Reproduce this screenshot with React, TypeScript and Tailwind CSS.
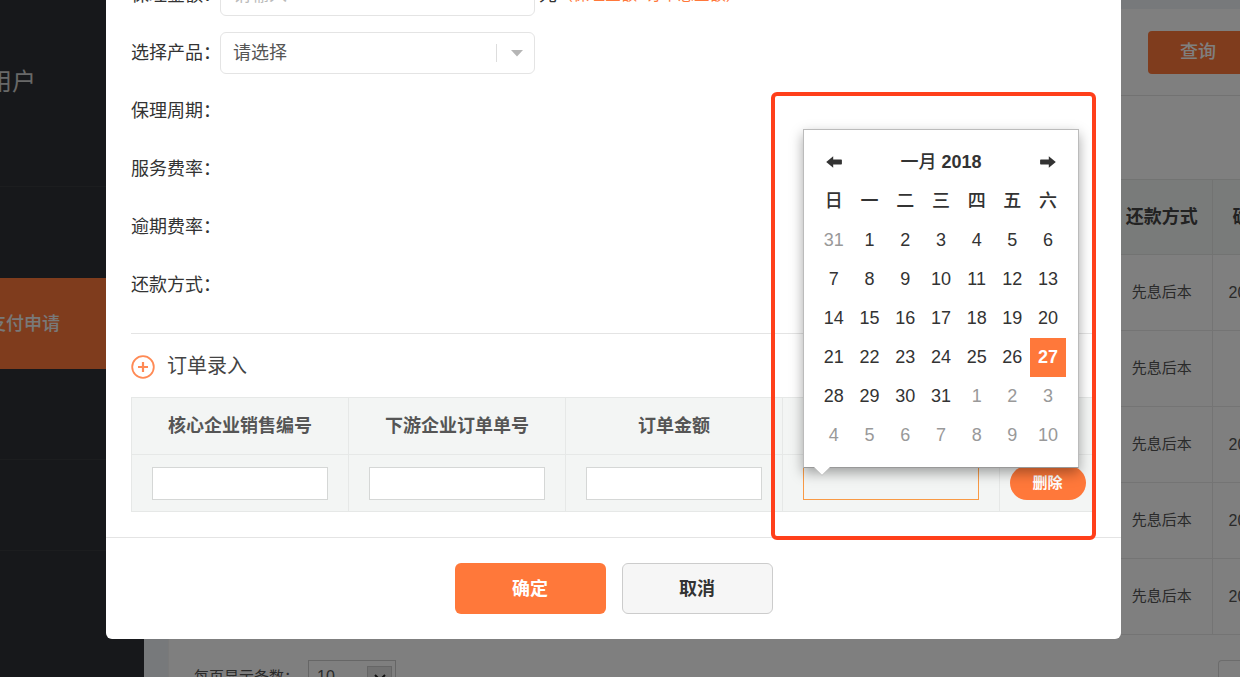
import { useState } from 'react'

interface Day {
  n: number
  muted?: boolean
}

const WEEKDAYS = ['日', '一', '二', '三', '四', '五', '六']

// January 2018 with the tail of December and the head of February
const DAYS: Day[] = [
  { n: 31, muted: true },
  ...Array.from({ length: 31 }, (_, i) => ({ n: i + 1 })),
  ...Array.from({ length: 10 }, (_, i) => ({ n: i + 1, muted: true })),
]
const WEEKS = Array.from({ length: 6 }, (_, i) => DAYS.slice(i * 7, i * 7 + 7))

const REPAY_ROWS = ['20', '', '20', '20', '20']

function ArrowIcon({ flip }: { flip?: boolean }) {
  return (
    <svg viewBox="0 0 16 12" className={flip ? 'mx-auto h-3 w-4 rotate-180' : 'mx-auto h-3 w-4'} fill="currentColor">
      <path d="M0.2 6 7.2 0.2V3.6H15.2Q15.9 3.6 15.9 4.3V7.7Q15.9 8.4 15.2 8.4H7.2V11.8Z" />
    </svg>
  )
}

function Calendar() {
  const [selected, setSelected] = useState(27)

  return (
    <div className="absolute bottom-full left-0 z-20 -mb-px w-[276px] border border-[#bbb] border-b-[#999] bg-white px-3 pt-[13px] pb-3 shadow-[0_5px_12px_rgba(0,0,0,0.35)]">
      <table className="w-full table-fixed border-collapse text-center text-lg leading-6 text-[#333]">
        <thead>
          <tr className="h-[39px]">
            <th className="p-0">
              <button type="button" aria-label="上个月" className="block w-full"><ArrowIcon /></button>
            </th>
            <th colSpan={5} className="p-0 font-bold">
              <span className="font-medium">一月</span> 2018
            </th>
            <th className="p-0">
              <button type="button" aria-label="下个月" className="block w-full"><ArrowIcon flip /></button>
            </th>
          </tr>
          <tr className="h-[39px]">
            {WEEKDAYS.map((d) => (
              <th key={d} className="p-0 font-medium">{d}</th>
            ))}
          </tr>
        </thead>
        <tbody>
          {WEEKS.map((week, i) => (
            <tr key={i} className="h-[39px]">
              {week.map((d) => {
                const active = !d.muted && d.n === selected
                return (
                  <td key={d.n} className="p-0">
                    <button
                      type="button"
                      onClick={() => !d.muted && setSelected(d.n)}
                      className={
                        active
                          ? 'block h-[39px] w-full bg-[#ff783a] font-bold text-white'
                          : d.muted
                            ? 'block h-[39px] w-full text-[#999]'
                            : 'block h-[39px] w-full'
                      }
                    >
                      {d.n}
                    </button>
                  </td>
                )
              })}
            </tr>
          ))}
        </tbody>
      </table>
      <svg viewBox="0 0 16 9" className="absolute top-full left-2.5 h-[9px] w-4">
        <path d="M0 0H16L8 8Z" fill="#fff" />
        <path d="M0 0.5 8 8.3 16 0.5" fill="none" stroke="#bbb" strokeWidth="0.7" />
      </svg>
    </div>
  )
}

function Background() {
  return (
    <div className="flex h-full">
      <aside className="w-36 shrink-0 overflow-hidden bg-[#2e3037] text-lg text-white">
        <div className="h-[187px] border-b border-[#383a3f] pt-16">
          <p className="-ml-3 text-2xl leading-9 whitespace-nowrap text-[#d0d0d0]">用户</p>
        </div>
        <nav>
          <div className="h-[91px]" />
          <a href="#" className="flex h-[91px] items-center bg-[#ff783a] font-medium text-[#f2f2f2]">
            <span className="-ml-3 whitespace-nowrap">支付申请</span>
          </a>
          <div className="h-[91px] border-b border-[#383a3f]" />
          <div className="h-[91px] border-b border-[#383a3f]" />
        </nav>
      </aside>

      <main className="flex-1 overflow-hidden bg-[#eff3f6] pt-[9px] pl-6">
        <div className="h-full border-l border-[#f4f4f4] bg-white">
          <div className="flex h-[87px] items-center justify-end border-b border-[#e4e4e4]">
            <button type="button" className="-mr-2 h-[43px] w-[100px] rounded bg-[#ff783a] text-lg font-medium text-white">查询</button>
          </div>
          <div className="pt-[83px] pl-6">
            <table className="w-full table-fixed border-collapse whitespace-nowrap text-[#555]">
              <colgroup>
                <col />
                <col className="w-[100px]" />
                <col className="w-7" />
              </colgroup>
              <thead>
                <tr className="h-[75px] border-y border-[#e4e6e5] bg-[#f3f6f5] text-lg text-[#444]">
                  <th />
                  <th className="border-r border-[#e4e6e5] p-0 font-bold">还款方式</th>
                  <th className="p-0 pl-5 text-left font-bold">确</th>
                </tr>
              </thead>
              <tbody>
                {REPAY_ROWS.map((date, i) => (
                  <tr key={i} className="h-[76px] border-b border-[#e8e8e8] text-[15px]">
                    <td />
                    <td className="border-r border-[#e8e8e8] p-0 text-center">先息后本</td>
                    <td className="p-0 pl-4 text-base">{date}</td>
                  </tr>
                ))}
              </tbody>
            </table>
          </div>
          <div className="mt-[25px] flex items-center justify-between pl-[25px]">
            <label className="flex h-[34px] items-center text-[15px] text-[#555]">
              <span className="w-[114px]">每页显示条数：</span>
              <span className="relative">
                <select className="block h-[34px] w-[88px] appearance-none border border-[#ccc] px-2 text-base">
                  <option>10</option>
                </select>
                <span className="pointer-events-none absolute top-1.5 right-1 grid h-[22px] w-[25px] place-items-center border border-[#ccc] bg-[#e4e4e4]">
                  <svg viewBox="0 0 12 7" className="h-[7px] w-3" fill="none" stroke="#222" strokeWidth="2">
                    <path d="M1 1 6 6 11 1" />
                  </svg>
                </span>
              </span>
            </label>
            <button type="button" aria-label="上一页" className="h-[34px] w-[22px] rounded-l border border-r-0 border-[#d8d8d8]" />
          </div>
        </div>
      </main>
    </div>
  )
}

const FIELDS = ['保理周期：', '服务费率：', '逾期费率：', '还款方式：']

export default function App() {
  return (
    <div className="relative h-screen overflow-hidden font-['Liberation_Sans','Noto_Sans_CJK_SC',sans-serif]">
      <Background />

      <div className="absolute inset-0 flex items-start bg-black/50 pr-[119px] pl-[106px]">
        <div role="dialog" aria-label="订单录入" className="relative flex-1 overflow-hidden rounded-b-md bg-white text-lg text-[#333]">
          {/* the dialog is scrolled, its first row is cut by the window */}
          <form className="-mt-[26px] px-[25px]">
            <div className="flex flex-col gap-4">
              <div className="flex h-[42px] items-center">
                <label htmlFor="amount" className="w-[89px] whitespace-nowrap">保理金额：</label>
                <input id="amount" placeholder="请输入" className="h-[42px] w-[315px] rounded-md border border-[#e4e4e4] px-3 placeholder:text-[#bbb]" />
                <span className="ml-1">元</span>
                <span className="text-base text-[#ff783a]">（保理金额≤订单总金额）</span>
              </div>
              <div className="flex h-[42px] items-center">
                <label htmlFor="product" className="w-[89px] whitespace-nowrap">选择产品：</label>
                <div className="relative">
                  <select id="product" className="block h-[42px] w-[315px] appearance-none rounded-md border border-[#e4e4e4] px-3 text-[#555]">
                    <option>请选择</option>
                  </select>
                  <span className="pointer-events-none absolute inset-y-3 right-3 flex w-[27px] items-center justify-end border-l border-[#ddd]">
                    <svg viewBox="0 0 12 7" className="h-[7px] w-3" fill="#b5b5b5">
                      <path d="M0 0H12L6 6.6Z" />
                    </svg>
                  </span>
                </div>
              </div>
              {FIELDS.map((f) => (
                <p key={f} className="h-[42px] leading-[42px]">{f}</p>
              ))}
            </div>

            <div className="mt-[27px] border-t border-[#e4e4e4] pt-4">
              <h2 className="flex h-8 items-center gap-3 text-xl text-[#444]">
                <button type="button" aria-label="添加订单">
                  <svg viewBox="0 0 24 24" className="mt-0.5 block size-6" fill="none" stroke="#ff8a55">
                    <circle cx="12" cy="12" r="10.8" strokeWidth="1.8" />
                    <path d="M12 7V17M7 12H17" strokeWidth="2.2" />
                  </svg>
                </button>
                订单录入
              </h2>
            </div>

            <table className="mt-[15px] w-full table-fixed border-collapse bg-[#f3f5f4]">
              <colgroup>
                <col className="w-[217px]" />
                <col className="w-[217px]" />
                <col className="w-[217px]" />
                <col className="w-[217px]" />
                <col />
              </colgroup>
              <thead>
                <tr className="h-[57px] text-[#555]">
                  <th className="border border-[#e6e8e7] p-0 font-bold">核心企业销售编号</th>
                  <th className="border border-[#e6e8e7] p-0 font-bold">下游企业订单单号</th>
                  <th className="border border-[#e6e8e7] p-0 font-bold">订单金额</th>
                  <th className="border border-[#e6e8e7] p-0" />
                  <th className="border border-[#e6e8e7] p-0" />
                </tr>
              </thead>
              <tbody>
                <tr className="h-[57px]">
                  {['核心企业销售编号', '下游企业订单单号', '订单金额'].map((name) => (
                    <td key={name} className="border border-[#e6e8e7] px-5 py-0">
                      <input aria-label={name} className="block h-[33px] w-full border border-[#d5d7d6] bg-white px-2" />
                    </td>
                  ))}
                  <td className="border border-[#e6e8e7] px-5 py-0">
                    <div className="relative">
                      <input aria-label="日期" className="block h-[33px] w-full border border-[#f99a45] px-2" />
                      <Calendar />
                    </div>
                  </td>
                  <td className="border border-[#e6e8e7] p-0">
                    <button type="button" className="mx-auto block h-[34px] w-[76px] rounded-full bg-[#ff783a] text-[15px] font-bold text-white">
                      删除
                    </button>
                  </td>
                </tr>
              </tbody>
            </table>
          </form>

          <div className="mt-[25px] flex justify-center gap-4 border-t border-[#e4e4e4] py-[25px] font-bold">
            <button type="button" className="h-[51px] w-[151px] rounded-md bg-[#ff783a] text-white">确定</button>
            <button type="button" className="h-[51px] w-[151px] rounded-md border border-[#ccc] bg-[#f6f6f6]">取消</button>
          </div>

          <div className="pointer-events-none absolute top-[92px] right-[25px] bottom-[99px] z-30 w-[325px] rounded-md border-4 border-[#ff3f1a]" />
        </div>
      </div>
    </div>
  )
}
